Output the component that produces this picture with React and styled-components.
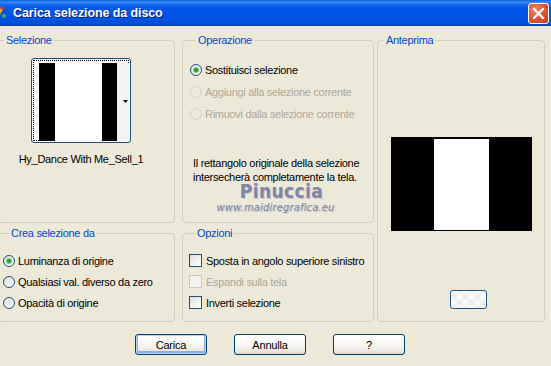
import React from 'react';
import styled, { createGlobalStyle } from 'styled-components';

const GlobalStyle = createGlobalStyle`
  html, body {
    margin: 0;
    padding: 0;
    background: #ECE9D8;
  }
  body {
    font-family: "Liberation Sans", Arial, sans-serif;
    font-size: 11px;
    letter-spacing: -0.3px;
    color: #000;
    overflow: hidden;
  }
`;

const Window = styled.div`
  width: 551px;
  height: 366px;
  background: #ECE9D8;
  display: flex;
  flex-direction: column;
  overflow: hidden;
`;

const TitleBar = styled.div`
  height: 26px;
  flex: none;
  display: flex;
  align-items: center;
  padding-right: 2px;
  background: linear-gradient(
    to bottom,
    #0A5FD9 0%,
    #3B8CF6 8%,
    #1C6AEE 16%,
    #0058E8 30%,
    #0054E3 65%,
    #0051DC 88%,
    #003FBF 100%
  );
`;

const TitleIcon = styled.svg`
  width: 16px;
  height: 16px;
  margin-left: -9px;
  flex: none;
`;

const TitleText = styled.div`
  flex: 1;
  margin-left: 6px;
  color: #fff;
  font-family: "Liberation Sans", Arial, sans-serif;
  font-weight: bold;
  font-size: 12.5px;
  letter-spacing: -0.1px;
  text-shadow: 1px 1px 0 #0A1E8C;
`;

const CloseButton = styled.div`
  width: 19px;
  height: 19px;
  border: 1px solid #fff;
  border-radius: 3px;
  display: flex;
  align-items: center;
  justify-content: center;
  background: radial-gradient(circle at 35% 30%, #F08B6A 0%, #E0593A 45%, #C3381A 100%);
`;

const Body = styled.div`
  display: grid;
  grid-template-columns: 178px 7px 192px 3px 168px;
  grid-template-rows: 189px 95px;
  grid-template-areas:
    "sel . op . prev"
    "crea . opz . prev";
  row-gap: 4px;
  margin-left: -3px;
  padding-top: 8px;
`;

const Group = styled.fieldset`
  grid-area: ${({ area }) => area};
  margin: 0;
  padding: ${({ pad }) => pad || '0'};
  border: 1px solid #D0D0BF;
  border-radius: 4px;
  min-width: 0;
  box-sizing: border-box;
  display: flex;
  flex-direction: column;
  align-items: ${({ center }) => (center ? 'center' : 'flex-start')};
`;

const Legend = styled.legend`
  margin-left: 6px;
  padding: 0 2px;
  color: #0046D5;
  font-size: 11px;
  line-height: 13px;
`;

const Thumb = styled.div`
  width: 100px;
  height: 85px;
  box-sizing: border-box;
  margin-top: 11px;
  border: 1px solid #1C5180;
  border-radius: 3px;
  background: #fff;
  padding: 1px;
`;

const Focus = styled.div`
  height: 100%;
  box-sizing: border-box;
  border: 1px dotted #000;
  padding: 2px 1px 0 5px;
`;

const ThumbLabel = styled.div`
  margin-top: 10px;
  line-height: 13px;
  white-space: nowrap;
`;

const Row = styled.label`
  display: flex;
  align-items: center;
  height: ${({ h }) => h || 21}px;
  color: ${({ disabled }) => (disabled ? '#ACA899' : '#000')};
  white-space: nowrap;
`;

const Radio = styled.span`
  width: 12px;
  height: 12px;
  box-sizing: border-box;
  border-radius: 50%;
  margin-right: 3px;
  flex: none;
  display: flex;
  align-items: center;
  justify-content: center;
  border: 1px solid ${({ disabled }) => (disabled ? '#D6D3C6' : '#1C5180')};
  background: ${({ disabled }) =>
    disabled ? '#ECE9D8' : 'linear-gradient(135deg, #DCDCD7 0%, #F4F4F1 60%, #FFFFFF 100%)'};

  &::after {
    content: '';
    display: ${({ checked }) => (checked ? 'block' : 'none')};
    width: 4px;
    height: 4px;
    border-radius: 50%;
    background: #21A121;
    box-shadow: 0 0 0 1px #7CD07C;
  }
`;

const Check = styled.span`
  width: 13px;
  height: 13px;
  box-sizing: border-box;
  margin-right: 4px;
  flex: none;
  border: 1px solid ${({ disabled }) => (disabled ? '#CAC8BB' : '#1C5180')};
  background: ${({ disabled }) =>
    disabled ? '#F4F3EE' : 'linear-gradient(135deg, #DCDCD7 0%, #F4F4F1 60%, #FFFFFF 100%)'};
`;

const Note = styled.p`
  margin: 31px 0 0 3px;
  line-height: 14px;
`;

const Watermark = styled.div`
  align-self: stretch;
  text-align: center;
  color: #7F85A3;
  font-family: "DejaVu Sans Condensed", "DejaVu Sans", sans-serif;
  font-size: ${({ small }) => (small ? 11 : 19)}px;
  font-style: ${({ small }) => (small ? 'italic' : 'normal')};
  font-weight: ${({ small }) => (small ? 'normal' : 'bold')};
  line-height: ${({ small }) => (small ? 14 : 19)}px;
  margin-top: ${({ small }) => (small ? 0 : -2)}px;
  padding-right: ${({ small }) => (small ? 12 : 0)}px;
  letter-spacing: ${({ small }) => (small ? 0.2 : 0.4)}px;
  text-shadow: 1px 1px 0 #C9C9D2;
`;

const Preview = styled.svg`
  display: block;
  margin-top: 90px;
  width: 141px;
  height: 94px;
  flex: none;
`;

const SmallButton = styled.div`
  align-self: flex-start;
  margin: 59px 0 0 72px;
  width: 37px;
  height: 19px;
  box-sizing: border-box;
  border: 1px solid #1C5180;
  border-radius: 3px;
  background:
    repeating-conic-gradient(#FBFBFB 0% 25%, #EDEDED 0% 50%) 50% 50% / 12px 12px;
  box-shadow: inset 0 0 0 1px #fff;
`;

const Footer = styled.div`
  display: flex;
  gap: 27px;
  padding: 12px 0 0 135px;
`;

const Button = styled.button`
  width: 72px;
  height: 21px;
  margin: 0;
  padding: 0;
  font-family: "Liberation Sans", Arial, sans-serif;
  font-size: 11px;
  letter-spacing: -0.2px;
  color: #000;
  border: 1px solid #003C74;
  border-radius: 3px;
  background: linear-gradient(to bottom, #FFFFFF 0%, #F5F4EF 60%, #E6E3D8 90%, #D6D0C5 100%);
  box-shadow: ${({ primary }) =>
    primary ? 'inset 0 0 0 1px #BCD4F6, inset 0 -1px 0 2px #89ADE4' : 'none'};
`;

const App = () => (
  <Window>
    <GlobalStyle />
    <TitleBar>
      <TitleIcon viewBox="0 0 16 16">
        <path d="M2 14 L9 3 L12 5 L5 15 Z" fill="#E7A33B" />
        <path d="M9 3 L11 1 L14 3 L12 5 Z" fill="#D03A22" />
        <path d="M2 14 L5 15 L3 16 Z" fill="#3C9A2E" />
        <circle cx="13" cy="11" r="2" fill="#49B43A" />
      </TitleIcon>
      <TitleText>Carica selezione da disco</TitleText>
      <CloseButton>
        <svg width="13" height="13" viewBox="0 0 13 13">
          <path d="M2 2 L11 11 M11 2 L2 11" stroke="#fff" strokeWidth="2.2" strokeLinecap="square" />
        </svg>
      </CloseButton>
    </TitleBar>

    <Body>
      <Group area="sel" center pad="0 10px 0 0">
        <Legend>Selezione</Legend>
        <Thumb>
          <Focus>
            <svg width="90" height="78" viewBox="0 0 90 78">
              <rect x="0" y="0" width="16" height="78" fill="#000" />
              <rect x="16" y="0" width="47" height="78" fill="#fff" />
              <rect x="63" y="0" width="15" height="78" fill="#000" />
              <rect x="78" y="0" width="12" height="78" fill="#F3F3F3" />
              <path d="M84 37 L89 37 L86.5 40 Z" fill="#000" />
            </svg>
          </Focus>
        </Thumb>
        <ThumbLabel>Hy_Dance With Me_Sell_1</ThumbLabel>
      </Group>

      <Group area="op" pad="12px 0 0 7px">
        <Legend>Operazione</Legend>
        <Row h={22}>
          <Radio checked />
          Sostituisci selezione
        </Row>
        <Row h={22} disabled>
          <Radio disabled />
          Aggiungi alla selezione corrente
        </Row>
        <Row h={22} disabled>
          <Radio disabled />
          Rimuovi dalla selezione corrente
        </Row>
        <Note>
          Il rettangolo originale della selezione
          <br />
          intersecherà completamente la tela.
        </Note>
        <Watermark>Pinuccia</Watermark>
        <Watermark small>www.maidiregrafica.eu</Watermark>
      </Group>

      <Group area="prev" center>
        <Legend>Anteprima</Legend>
        <Preview viewBox="0 0 141 94">
          <rect x="0" y="0" width="141" height="94" fill="#000" />
          <rect x="43" y="2" width="55" height="91" fill="#fff" />
        </Preview>
        <SmallButton />
      </Group>

      <Group area="crea" pad="10px 0 0 5px">
        <Legend>Crea selezione da</Legend>
        <Row>
          <Radio checked />
          Luminanza di origine
        </Row>
        <Row>
          <Radio />
          Qualsiasi val. diverso da zero
        </Row>
        <Row>
          <Radio />
          Opacità di origine
        </Row>
      </Group>

      <Group area="opz" pad="10px 0 0 6px">
        <Legend>Opzioni</Legend>
        <Row>
          <Check />
          Sposta in angolo superiore sinistro
        </Row>
        <Row disabled>
          <Check disabled />
          Espandi sulla tela
        </Row>
        <Row>
          <Check />
          Inverti selezione
        </Row>
      </Group>
    </Body>

    <Footer>
      <Button primary>Carica</Button>
      <Button>Annulla</Button>
      <Button>?</Button>
    </Footer>
  </Window>
);

export default App;
